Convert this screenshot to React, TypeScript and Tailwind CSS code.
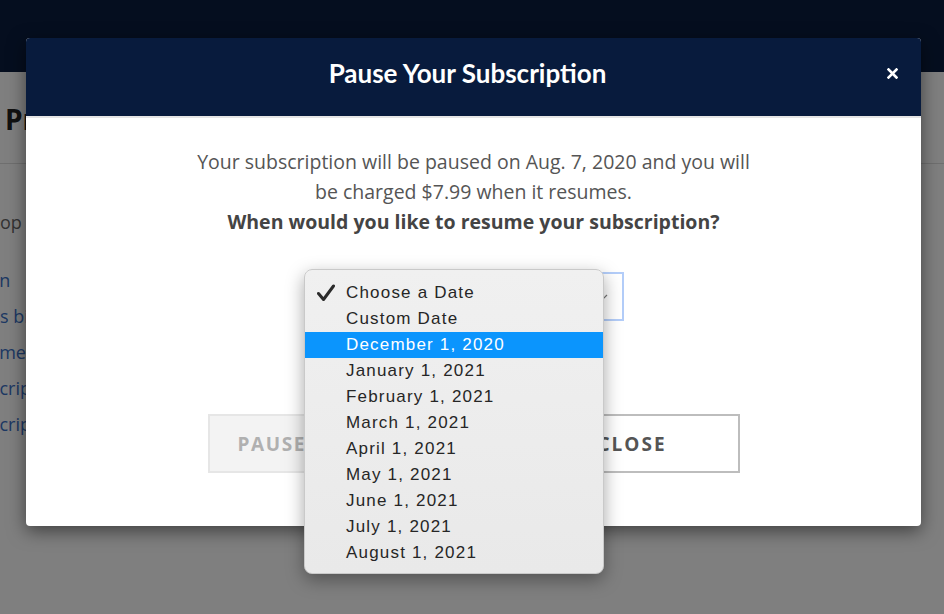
import React from 'react';

const dates = [
  'Choose a Date',
  'Custom Date',
  'December 1, 2020',
  'January 1, 2021',
  'February 1, 2021',
  'March 1, 2021',
  'April 1, 2021',
  'May 1, 2021',
  'June 1, 2021',
  'July 1, 2021',
  'August 1, 2021',
];

const CheckMark: React.FC = () => (
  <svg width="18" height="18" viewBox="0 0 18 18" className="absolute left-[12px] top-[4px]">
    <path d="M1.5 9.5 L6.5 15.5 L16.5 2" fill="none" stroke="#2b2b2b" strokeWidth="3" strokeLinecap="round" strokeLinejoin="round" />
  </svg>
);

// native select popup, open over the dialog
const DateMenu: React.FC = () => (
  <div className="absolute left-[278px] top-[151px] w-[300px] rounded-[8px] border border-[#c9c9c9] bg-gradient-to-b from-[#f0f0f0] to-[#e9e9e9] pt-[10px] pb-[7px] shadow-[0_6px_18px_rgba(0,0,0,0.35)] font-['Liberation_Sans',Arial,sans-serif] text-[17px] tracking-[0.07em] text-[#262626]">
    {dates.map((d, i) => (
      <div
        key={d}
        className={`relative h-[26px] pl-[41px] leading-[26px] ${i === 2 ? 'bg-[#0b95fd] text-white' : ''}`}
      >
        {i === 0 && <CheckMark />}
        {d}
      </div>
    ))}
  </div>
);

const App: React.FC = () => {
  return (
    <div className="relative w-[944px] h-[614px] overflow-hidden bg-white font-['Open_Sans',sans-serif]">
      {/* page behind the modal */}
      <div className="h-[72px] bg-[#0b1d3e]" />
      <div className="h-[92px] border-b border-[#dedede] pl-[5px] pt-[27px]">
        <h1 className="text-[28px] font-bold text-[#222] leading-[40px]">Profile Settings</h1>
      </div>
      <div className="overflow-hidden">
        <p className="mt-[43px] -ml-[21px] text-[18px] leading-[30px] text-[#666]">Shop options below</p>
        <ul className="mt-[25px] text-[18px] leading-[36px] text-[#3a70c6]">
          <li className="-ml-[26px]">Plan</li>
          <li className="-ml-[22px]">this billing cycle</li>
          <li className="-ml-[49px]">Customer details</li>
          <li className="-ml-[41px]">Subscription history</li>
          <li className="-ml-[41px]">Subscription settings</li>
        </ul>
      </div>

      <div className="absolute inset-0 bg-black/50" />

      {/* modal */}
      <div className="absolute left-[26px] top-[38px] w-[895px] rounded-[4px] bg-white shadow-[0_5px_18px_rgba(0,0,0,0.5)]">
        <div className="relative flex h-[80px] items-center justify-center rounded-t-[4px] border-b-2 border-[#e5e5e5] bg-[#081b3d] pb-[8px] pr-[12px]">
          <h2 className="font-['Lato',sans-serif] text-[26px] font-bold text-white">Pause Your Subscription</h2>
          <button className="absolute right-[23px] top-[30px]">
            <svg width="11" height="11" viewBox="0 0 11 11">
              <path d="M1.5 1.5 L9.5 9.5 M9.5 1.5 L1.5 9.5" stroke="white" strokeWidth="2.6" strokeLinecap="square" />
            </svg>
          </button>
        </div>

        <div className="relative flex flex-col items-center px-8 pt-[29px] pb-[53px]">
          <p className="text-center text-[19.5px] leading-[30px] text-[#555]">
            Your subscription will be paused on Aug. 7, 2020 and you will
            <br />
            be charged $7.99 when it resumes.
            <br />
            <b className="text-[#444]">When would you like to resume your subscription?</b>
          </p>

          <div className="mt-[35px] flex h-[49px] w-[300px] items-center justify-between border-2 border-[#b3cdf9] bg-white pl-4 pr-[14px]">
            <span className="text-[16px] text-[#555]">Choose a Date</span>
            <svg width="8" height="5" viewBox="0 0 8 5">
              <path d="M1 1 L4 4 L7 1" fill="none" stroke="#777" strokeWidth="1.2" />
            </svg>
          </div>

          <div className="mt-[93px] flex gap-6">
            <button className="h-[59px] w-[293px] border-2 border-[#e6e6e6] bg-[#f3f3f3] pt-[2px] text-[19px] font-bold tracking-[1.6px] text-[#b0b0b0]">
              PAUSE SUBSCRIPTION
            </button>
            <button className="h-[59px] w-[215px] border-2 border-[#bdbdbd] bg-white pt-[2px] text-[19px] font-bold tracking-[2px] text-[#555]">
              CLOSE
            </button>
          </div>

          <DateMenu />
        </div>
      </div>
    </div>
  );
};

export default App;
